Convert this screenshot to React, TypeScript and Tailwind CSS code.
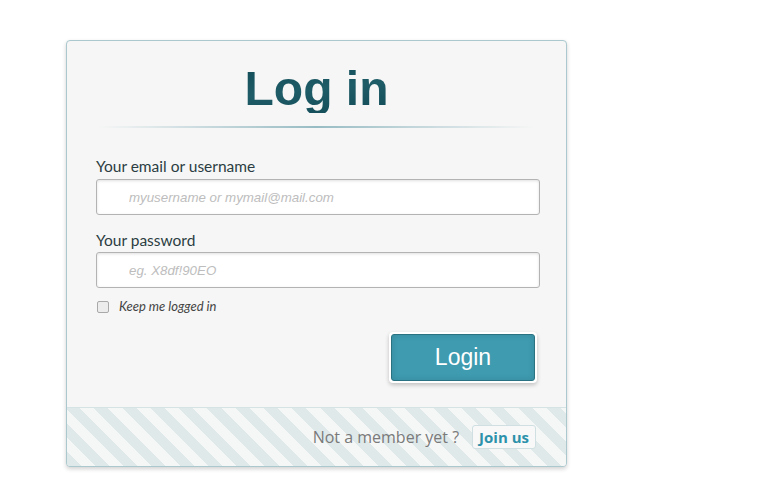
export default function App() {
  return (
    <div className="min-h-screen bg-white pl-[66px] pt-[40px]">
      <div className="w-[501px] overflow-hidden rounded-[4px] border border-[#aac8ce] bg-[#f6f6f6] shadow-[0_2px_4px_rgba(0,0,0,0.18)]">
        <div className="px-[29px] pt-[24px]">
          <h1
            className="bg-gradient-to-br from-[#0b4450] via-[#1e5c67] to-[#0b4450] bg-clip-text text-center text-[48px] font-bold leading-none text-transparent"
            style={{ fontFamily: '"Liberation Sans", Arial, sans-serif' }}
          >
            Log in
          </h1>
          <div className="mx-[2px] mt-[13px] h-[2px] bg-gradient-to-r from-transparent via-[#98bcc4] to-transparent" />

          <form className="mt-[28px]" style={{ fontFamily: '"Lato", "Open Sans", sans-serif' }}>
            <label className="block text-[15.5px] leading-[20px] text-[#2b3d42]">Your email or username</label>
            <input
              className="mt-[3px] block h-[36px] w-[444px] rounded-[3px] border border-[#b3b3b3] bg-white pl-[32px] text-[13.3px] italic shadow-[inset_0_1px_3px_rgba(0,0,0,0.12)] outline-none placeholder:text-[#bdbdbd]"
              style={{ fontFamily: '"Liberation Sans", Arial, sans-serif' }}
              placeholder="myusername or mymail@mail.com"
            />

            <label className="mt-[15px] block text-[15.5px] leading-[20px] text-[#2b3d42]">Your password</label>
            <input
              type="password"
              className="mt-[2px] block h-[36px] w-[444px] rounded-[3px] border border-[#b3b3b3] bg-white pl-[32px] text-[13.3px] italic shadow-[inset_0_1px_3px_rgba(0,0,0,0.12)] outline-none placeholder:text-[#bdbdbd]"
              style={{ fontFamily: '"Liberation Sans", Arial, sans-serif' }}
              placeholder="eg. X8df!90EO"
            />

            <div className="mt-[11px] flex h-[16px] items-center">
              <span className="ml-[1px] h-[12px] w-[12px] rounded-[2px] border border-[#a9a9a9] bg-[#ececec]" />
              <span className="ml-[10px] text-[13px] italic text-[#444]">Keep me logged in</span>
            </div>

            <div className="mt-[17px] flex justify-end">
              <div className="rounded-[4px] bg-white p-[2px] shadow-[0_2px_4px_rgba(0,0,0,0.22)]">
                <button
                  type="button"
                  className="flex h-[47px] w-[144px] items-center justify-center rounded-[3px] border border-[#2a7282] bg-[#3e9bb0] text-[23px] text-white shadow-[inset_0_0_6px_rgba(0,0,0,0.12)]"
                  style={{ fontFamily: '"Liberation Sans", Arial, sans-serif' }}
                >
                  Login
                </button>
              </div>
            </div>
          </form>
        </div>

        <div
          className="mt-[24px] flex h-[59px] items-center justify-end border-t border-[#d6e3e5] pr-[30px] bg-[repeating-linear-gradient(45deg,#dfe9ea_0px,#dfe9ea_10px,#f5f6f6_10px,#f5f6f6_20px)]"
          style={{ fontFamily: '"Open Sans", sans-serif' }}
        >
          <span className="text-[16px] text-[#7a7a7a]">Not a member yet ?</span>
          <a className="ml-[13px] flex h-[24px] items-center rounded-[3px] border border-[#cfdfe2] bg-[#f7f8f7] px-[6px] text-[15px] font-bold text-[#2c91ab]">
            Join us
          </a>
        </div>
      </div>
    </div>
  );
}
